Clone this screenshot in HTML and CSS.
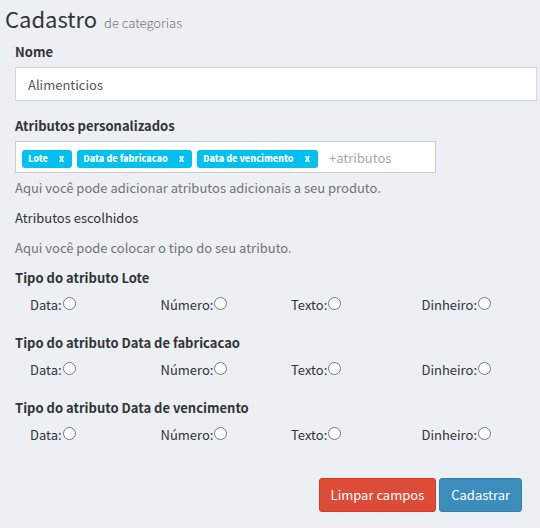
FILE: index.html
```html
<!DOCTYPE html>
<html lang="pt-BR">
<head>
<meta charset="utf-8">
<meta name="viewport" content="width=device-width, initial-scale=1">
<title>Cadastro de categorias</title>
<link rel="stylesheet" href="styles.css">
</head>
<body>
<header class="page-header">
  <h1>Cadastro <small>de categorias</small></h1>
</header>
<form class="form">
  <div class="group">
    <label class="title" for="nome">Nome</label>
    <input class="control" id="nome" type="text" value="Alimenticios">
  </div>
  <div class="group-tags">
    <label class="title" for="atributos">Atributos personalizados</label>
    <div class="tags">
      <span class="tag">Lote<button type="button" class="remove">x</button></span>
      <span class="tag">Data de fabricacao<button type="button" class="remove">x</button></span>
      <span class="tag">Data de vencimento<button type="button" class="remove">x</button></span>
      <input class="tag-input" id="atributos" type="text" placeholder="+atributos">
    </div>
    <p class="help">Aqui você pode adicionar atributos adicionais a seu produto.</p>
  </div>
  <p class="text">Atributos escolhidos</p>
  <p class="text help">Aqui você pode colocar o tipo do seu atributo.</p>
  <fieldset class="types">
    <legend class="title">Tipo do atributo Lote</legend>
    <div class="options">
      <label class="option">Data:<input type="radio" name="lote"></label>
      <label class="option">Número:<input type="radio" name="lote"></label>
      <label class="option">Texto:<input type="radio" name="lote"></label>
      <label class="option">Dinheiro:<input type="radio" name="lote"></label>
    </div>
  </fieldset>
  <fieldset class="types">
    <legend class="title">Tipo do atributo Data de fabricacao</legend>
    <div class="options">
      <label class="option">Data:<input type="radio" name="fabricacao"></label>
      <label class="option">Número:<input type="radio" name="fabricacao"></label>
      <label class="option">Texto:<input type="radio" name="fabricacao"></label>
      <label class="option">Dinheiro:<input type="radio" name="fabricacao"></label>
    </div>
  </fieldset>
  <fieldset class="types">
    <legend class="title">Tipo do atributo Data de vencimento</legend>
    <div class="options">
      <label class="option">Data:<input type="radio" name="vencimento"></label>
      <label class="option">Número:<input type="radio" name="vencimento"></label>
      <label class="option">Texto:<input type="radio" name="vencimento"></label>
      <label class="option">Dinheiro:<input type="radio" name="vencimento"></label>
    </div>
  </fieldset>
  <div class="actions">
    <button type="reset" class="btn btn-danger">Limpar campos</button>
    <button type="submit" class="btn btn-primary">Cadastrar</button>
  </div>
</form>
</body>
</html>
```
FILE: styles.css
```css
* {
  box-sizing: border-box;
}

body {
  margin: 0;
  background: #ecf0f5;
  color: #333;
  font-family: "Source Sans Pro", "Noto Sans CJK JP", sans-serif;
  font-size: 13px;
  line-height: 20px;
}

input,
button {
  font: inherit;
}

p {
  margin: 0;
}

.page-header {
  padding: 5px 5px 0;
}

h1 {
  margin: 0;
  font-size: 22px;
  font-weight: 400;
  line-height: 26px;
}

h1 small {
  padding-left: 2px;
  color: #777;
  font-size: 13px;
  font-weight: 300;
}

.form {
  padding: 6px 3px 16px 15px;
}

.group {
  margin-bottom: 15px;
}

.title {
  display: block;
  margin-bottom: 5px;
  padding: 0;
  font-weight: 700;
}

.control {
  display: block;
  width: 100%;
  height: 34px;
  padding: 6px 12px;
  border: 1px solid #d2d6de;
  border-radius: 0;
  background: #fff;
  color: #555;
}

.tags {
  display: flex;
  align-items: center;
  gap: 5px;
  width: 421px;
  max-width: 100%;
  height: 32px;
  padding: 4px 6px 0;
  border: 1px solid #ccc;
  background: #fff;
}

.tag {
  display: flex;
  flex: none;
  align-items: center;
  height: 18px;
  padding: 0 6px;
  border-radius: 3px;
  background: #00c0ef;
  color: #fff;
  font-size: 9px;
  font-weight: 900;
  line-height: 18px;
}

.remove {
  margin: 0 0 0 9px;
  padding: 0 2px;
  border: 0;
  background: none;
  color: inherit;
  cursor: pointer;
}

.tag-input {
  flex: 1;
  min-width: 0;
  height: 24px;
  margin-bottom: 4px;
  padding: 0 6px;
  border: 0;
  outline: 0;
  background: none;
}

.tag-input::placeholder {
  color: #a9a9a9;
}

.help {
  color: #737373;
}

.group-tags .help {
  margin-top: 5px;
}

.text {
  margin-top: 10px;
}

.types {
  min-width: 0;
  margin: 10px 0 0;
  padding: 0;
  border: 0;
}

.types + .types {
  margin-top: 18px;
}

.options {
  display: grid;
  grid-template-columns: repeat(4, 1fr);
  height: 22px;
}

.option {
  display: flex;
  align-items: flex-start;
  gap: 1px;
  padding: 2px 0 0 15px;
}

.option input {
  width: 13px;
  height: 13px;
  margin: 2px 0 0;
}

.actions {
  display: flex;
  justify-content: flex-end;
  gap: 3px;
  margin-top: 33px;
  padding-right: 15px;
}

.btn {
  height: 34px;
  padding: 6px 11px;
  border: 1px solid;
  border-radius: 3px;
  color: #fff;
  cursor: pointer;
}

.btn-danger {
  border-color: #d73925;
  background: #dd4b39;
}

.btn-primary {
  border-color: #367fa9;
  background: #3c8dbc;
}
```
